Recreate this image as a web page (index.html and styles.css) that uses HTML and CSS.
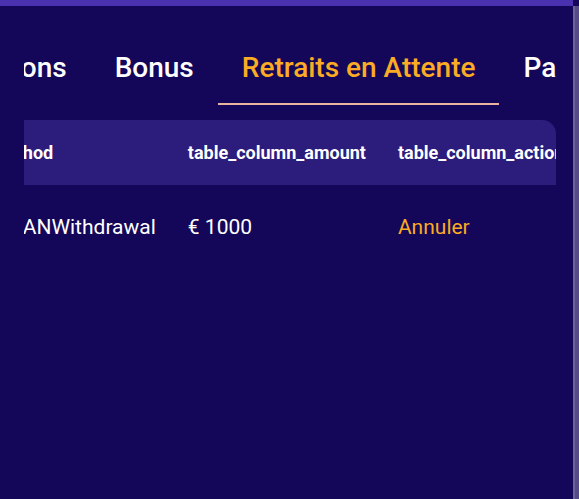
FILE: index.html
```html
<!DOCTYPE html>
<html lang="fr">
<head>
    <meta charset="UTF-8">
    <meta name="viewport" content="width=device-width, initial-scale=1.0">
    <link rel="stylesheet" href="styles.css">
</head>
<body>
    <div class="top-bar"></div>
    <div class="page">
        <main class="content">
            <nav class="tabs">
                <div class="tabs-track">
                    <a class="tab">Transactions</a>
                    <a class="tab">Bonus</a>
                    <a class="tab active">Retraits en Attente</a>
                    <a class="tab">Paiements</a>
                </div>
            </nav>

            <div class="table-wrap">
                <table class="withdrawals">
                    <thead>
                        <tr>
                            <th class="col-method">table_column_method</th>
                            <th class="col-amount">table_column_amount</th>
                            <th class="col-action">table_column_action</th>
                        </tr>
                    </thead>
                    <tbody>
                        <tr>
                            <td class="col-method">WireTransfer_IBANWithdrawal</td>
                            <td class="col-amount">€ 1000</td>
                            <td class="col-action"><a class="cancel">Annuler</a></td>
                        </tr>
                    </tbody>
                </table>
            </div>
        </main>
        <div class="side-strip"></div>
    </div>
</body>
</html>
```

FILE: styles.css
```css
* {
    box-sizing: border-box;
}

html, body {
    height: 100%;
}

body {
    margin: 0;
    background-color: #14075a;
    font-family: Roboto, "Liberation Sans", sans-serif;
    color: #fff;
    display: flex;
    flex-direction: column;
    overflow: hidden;
}

.top-bar {
    height: 6px;
    background-color: #4a31b0;
    margin-right: 6px;
}

.page {
    flex: 1;
    display: flex;
}

.content {
    flex: 1;
    padding: 0 17px 0 24px;
    min-width: 0;
}

.side-strip {
    width: 6px;
    background-color: #554a86;
    border-left: 2px solid #6c6399;
}

/* tabs */
.tabs {
    margin-top: 35px;
    overflow: hidden;
}

.tabs-track {
    display: flex;
    margin-left: -144px;
}

.tab {
    flex-shrink: 0;
    padding: 10px 24px 19px;
    font-size: 28px;
    font-weight: 500;
    color: #fff;
    white-space: nowrap;
    border-bottom: 2px solid transparent;
}

.tab.active {
    color: #fbab24;
    border-bottom-color: #e9b3a0;
}

/* table */
.table-wrap {
    margin-top: 15px;
    overflow: hidden;
    border-radius: 0 14px 0 0;
}

.withdrawals {
    border-collapse: collapse;
    width: max-content;
    margin-left: -165px;
    white-space: nowrap;
}

.withdrawals th {
    background-color: #2c1c7b;
    height: 65px;
    padding: 0 16px;
    text-align: left;
    font-size: 18px;
    font-weight: 700;
}

.withdrawals td {
    height: 84px;
    padding: 0 16px;
    font-size: 21px;
    font-weight: 400;
}

.col-method {
    padding-left: 0;
}

.col-amount {
    width: 206px;
}

.col-action {
    width: 220px;
}

.cancel {
    color: #fbab24;
}
```
